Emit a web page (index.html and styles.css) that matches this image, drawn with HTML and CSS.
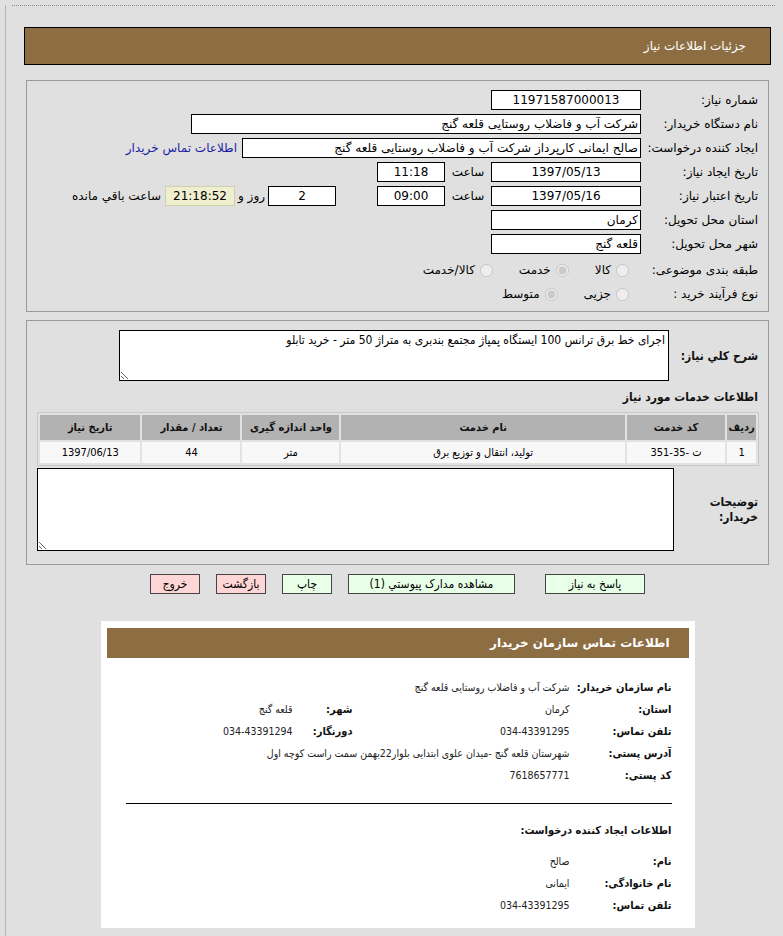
FILE: index.html
```html
<!DOCTYPE html>
<html lang="fa" dir="rtl">
<head>
  <meta charset="UTF-8" />
  <title>جزئیات اطلاعات نیاز</title>
  <link rel="stylesheet" href="styles.css">
</head>
<body>
  <div class="page">
    <div class="topline"></div>
    <div class="wrap">
      <div class="titlebar">جزئیات اطلاعات نیاز</div>

      <!-- مشخصات نیاز -->
      <div class="panel form-panel">
        <div class="row">
          <span class="lbl">شماره نیاز:</span>
          <input class="box w150 center" value="11971587000013" readonly>
        </div>
        <div class="row">
          <span class="lbl">نام دستگاه خریدار:</span>
          <input class="box w450" value="شرکت آب و فاضلاب روستایی قلعه گنج" readonly>
        </div>
        <div class="row">
          <span class="lbl">ایجاد کننده درخواست:</span>
          <input class="box w399" value="صالح ایمانی کارپرداز شرکت آب و فاضلاب روستایی قلعه گنج" readonly>
          <a class="buyer-link" href="#contact">اطلاعات تماس خریدار</a>
        </div>
        <div class="row">
          <span class="lbl">تاریخ ایجاد نیاز:</span>
          <input class="box w150 center" value="1397/05/13" readonly>
          <span class="saat">ساعت</span>
          <input class="box w68 center" value="11:18" readonly>
        </div>
        <div class="row">
          <span class="lbl">تاریخ اعتبار نیاز:</span>
          <input class="box w150 center" value="1397/05/16" readonly>
          <span class="saat">ساعت</span>
          <input class="box w68 center" value="09:00" readonly>
          <input class="box w68 center days" value="2" readonly>
          <span class="rooz">روز و</span>
          <span class="countdown">21:18:52</span>
          <span class="remain">ساعت باقي مانده</span>
        </div>
        <div class="row">
          <span class="lbl">استان محل تحویل:</span>
          <input class="box w150" value="کرمان" readonly>
        </div>
        <div class="row">
          <span class="lbl">شهر محل تحویل:</span>
          <input class="box w150" value="قلعه گنج" readonly>
        </div>
        <div class="row radio-row first-radio">
          <span class="lbl">طبقه بندی موضوعی:</span>
          <label class="opt"><input type="radio" name="cat" disabled> کالا</label>
          <label class="opt"><input type="radio" name="cat" checked disabled> خدمت</label>
          <label class="opt"><input type="radio" name="cat" disabled> کالا/خدمت</label>
        </div>
        <div class="row radio-row">
          <span class="lbl">نوع فرآیند خرید :</span>
          <label class="opt"><input type="radio" name="proc" disabled> جزیی</label>
          <label class="opt"><input type="radio" name="proc" checked disabled> متوسط</label>
        </div>
      </div>

      <!-- شرح و خدمات -->
      <div class="panel desc-panel">
        <div class="desc-row">
          <span class="blbl">شرح كلي نياز:</span>
          <textarea class="desc" readonly>اجرای خط برق ترانس 100 ایستگاه پمپاژ مجتمع بندبری به متراژ 50 متر - خرید تابلو</textarea>
        </div>

        <div class="section-title">اطلاعات خدمات مورد نیاز</div>

        <table class="items">
          <thead>
            <tr>
              <th class="c-row">ردیف</th>
              <th class="c-code">کد خدمت</th>
              <th class="c-name">نام خدمت</th>
              <th class="c-unit">واحد اندازه گیری</th>
              <th class="c-qty">تعداد / مقدار</th>
              <th class="c-date">تاریخ نیاز</th>
            </tr>
          </thead>
          <tbody>
            <tr>
              <td>1</td>
              <td>ت -35-351</td>
              <td>تولید، انتقال و توزیع برق</td>
              <td>متر</td>
              <td>44</td>
              <td>1397/06/13</td>
            </tr>
          </tbody>
        </table>

        <div class="notes-row">
          <span class="blbl notes-lbl">توضیحات خریدار:</span>
          <textarea class="notes" readonly></textarea>
        </div>
      </div>

      <div class="buttons">
        <button class="btn green wide1">پاسخ به نیاز</button>
        <button class="btn green wide2">مشاهده مدارک پیوستي (1)</button>
        <button class="btn green">چاپ</button>
        <button class="btn pink">بازگشت</button>
        <button class="btn pink">خروج</button>
      </div>

      <!-- اطلاعات تماس -->
      <div class="contact" id="contact">
        <div class="contact-head">اطلاعات تماس سازمان خریدار</div>
        <div class="contact-body">
          <div class="info-row">
            <span class="k">نام سازمان خریدار:</span>
            <span class="v">شرکت آب و فاضلاب روستایی قلعه گنج</span>
          </div>
          <div class="info-row">
            <span class="k">استان:</span>
            <span class="v">کرمان</span>
            <span class="k2">شهر:</span>
            <span class="v2">قلعه گنج</span>
          </div>
          <div class="info-row">
            <span class="k">تلفن تماس:</span>
            <span class="v">034-43391295</span>
            <span class="k2">دورنگار:</span>
            <span class="v2">034-43391294</span>
          </div>
          <div class="info-row">
            <span class="k">آدرس پستی:</span>
            <span class="v">شهرستان قلعه گنج -میدان علوی ابتدایی بلوار22بهمن سمت راست کوچه اول</span>
          </div>
          <div class="info-row">
            <span class="k">کد پستی:</span>
            <span class="v">7618657771</span>
          </div>

          <hr class="sep">

          <div class="info-title">اطلاعات ایجاد کننده درخواست:</div>
          <div class="info-row">
            <span class="k">نام:</span>
            <span class="v">صالح</span>
          </div>
          <div class="info-row">
            <span class="k">نام خانوادگی:</span>
            <span class="v">ایمانی</span>
          </div>
          <div class="info-row">
            <span class="k">تلفن تماس:</span>
            <span class="v">034-43391295</span>
          </div>
        </div>
      </div>
    </div>
  </div>
</body>
</html>
```

FILE: styles.css
```css
:root {
  --bg: #e0e0e0;
  --brown: #8d6e42;
  --panel-border: #9a9a9a;
  --narrow: "DejaVu Sans Condensed", "DejaVu Sans", sans-serif;
}

body {
  margin: 0;
  background: var(--bg);
  font-family: "DejaVu Sans", Tahoma, sans-serif;
  font-size: 12px;
  color: #000;
}

.page {
  margin-left: 5px;
  border-left: 1px solid #b4b4b4;
  min-height: 100vh;
  padding-bottom: 11px;
  box-sizing: border-box;
}

.topline {
  margin: 5px 8px 0 6px;
  border-top: 1px dotted #8a8a8a;
}

.wrap {
  margin: 0 14px 0 20px;
}

.titlebar {
  margin: 21px -2px 0;
  height: 38px;
  box-sizing: border-box;
  border: 1px solid #000;
  background: var(--brown);
  color: #fff;
  font-size: 12px;
  display: flex;
  align-items: center;
  padding-right: 24px;
}

.panel {
  border: 1px solid var(--panel-border);
  background: var(--bg);
}

/* فرم بالا */
.form-panel {
  margin-top: 15px;
  padding: 7px 10px 5px;
}

.row {
  display: flex;
  align-items: center;
  height: 24px;
}

.first-radio { margin-top: 2px; }

.lbl {
  width: 113px;
  margin-left: 4px;
  white-space: nowrap;
}

.box {
  height: 20px;
  box-sizing: border-box;
  border: 1px solid #000;
  background: #fff;
  font-family: "DejaVu Sans", Tahoma, sans-serif;
  font-size: 12px;
  padding: 0 2px;
  margin: 0;
  outline: none;
  direction: rtl;
}

.center { text-align: center; }
.w150 { width: 150px; }
.w450 { width: 450px; }
.w399 { width: 399px; }
.w68 { width: 68px; }

.buyer-link {
  margin-right: 5px;
  color: #1c1ca8;
  text-decoration: none;
}

.saat {
  width: 46px;
  text-align: center;
}

.days { margin-right: 41px; }

.rooz {
  width: 33px;
  text-align: center;
}

.countdown {
  width: 70px;
  height: 20px;
  box-sizing: border-box;
  border: 1px solid #cfcfa8;
  background: #efefcf;
  text-align: center;
  line-height: 18px;
}

.remain { margin-right: 4px; }

.opt {
  display: inline-flex;
  align-items: center;
  gap: 5px;
  margin-left: 26px;
  color: #000;
}

.opt:first-of-type { margin-right: 12px; }

.opt input {
  margin: 0;
  width: 13px;
  height: 13px;
}

/* شرح و جدول */
.desc-panel {
  margin-top: 8px;
  padding: 9px 10px 13px;
}

.desc-row,
.notes-row {
  display: flex;
  align-items: center;
}

.blbl {
  font-family: var(--narrow);
  font-weight: bold;
  font-size: 12px;
  color: #111;
}

.desc-row .blbl { width: 89px; }

textarea {
  box-sizing: border-box;
  border: 1px solid #000;
  background: #fff;
  font-family: var(--narrow);
  font-size: 12px;
  padding: 2px 3px;
  margin: 0;
  outline: none;
}

.desc {
  width: 550px;
  height: 51px;
}

.section-title {
  margin-top: 6px;
  height: 20px;
  line-height: 20px;
  font-family: var(--narrow);
  font-weight: bold;
  color: #111;
}

.items {
  margin-top: 5px;
  margin-right: -1px;
  border: 1px solid #c8c8c8;
  border-spacing: 2px;
  background: #e2e2e2;
  font-family: var(--narrow);
  font-size: 11px;
}

.items th {
  background: #b2b2b2;
  height: 25px;
  padding: 0;
  font-weight: bold;
  color: #111;
}

.items td {
  background: #f8f8f8;
  height: 21px;
  padding: 0;
  text-align: center;
}

.c-row { width: 29px; }
.c-code { width: 99px; }
.c-name { width: 287px; }
.c-unit { width: 98px; }
.c-qty { width: 99px; }
.c-date { width: 101px; }

.notes-row { margin-top: 2px; }

.notes-lbl {
  width: 64px;
  margin-left: 20px;
  line-height: 15px;
}

.notes {
  width: 637px;
  height: 83px;
}

/* دکمه ها */
.buttons {
  margin-top: 9px;
  display: flex;
  justify-content: center;
  gap: 16px;
}

.btn {
  height: 20px;
  width: 50px;
  padding: 0;
  border: 1px solid #444;
  font-family: var(--narrow);
  font-size: 12px;
  color: #000;
  white-space: nowrap;
  cursor: pointer;
}

.green { background: #e8ffe8; }
.pink { background: #ffd6d6; }
.wide1 { width: 100px; margin-left: 14px; }
.wide2 { width: 167px; }

/* تماس */
.contact {
  width: 594px;
  margin: 27px auto 0;
  background: #fff;
  padding: 7px 6px 12px;
  box-sizing: border-box;
}

.contact-head {
  height: 30px;
  background: var(--brown);
  color: #fff;
  font-weight: bold;
  font-size: 12px;
  display: flex;
  align-items: center;
  padding-right: 19px;
}

.contact-body {
  padding: 18px 17px 0 0;
  font-family: var(--narrow);
  font-size: 10.5px;
  color: #222;
}

.info-row {
  display: flex;
  align-items: center;
  height: 22px;
  white-space: nowrap;
}

.k, .k2, .info-title {
  font-family: var(--narrow);
  font-weight: bold;
  font-size: 11px;
  color: #111;
  white-space: nowrap;
}

.k { width: 102px; }
.v { width: 217px; }
.k2 { width: 60px; }

.sep {
  margin: 17px 0 16px 19px;
  border: none;
  border-top: 1px solid #000;
}

.info-title {
  height: 22px;
  line-height: 22px;
  margin-bottom: 8px;
}
```
